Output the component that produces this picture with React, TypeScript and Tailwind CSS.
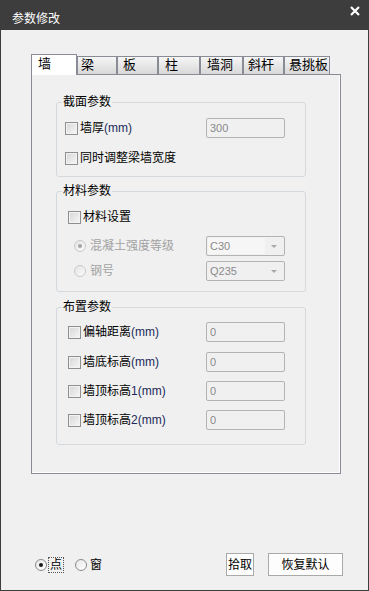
import React from "react";

const font = "font-['Liberation_Sans','Noto_Sans_CJK_SC',sans-serif]";

const tabs = [
  { label: "梁", cls: "w-[40px] pl-[3px]" },
  { label: "板", cls: "w-[41px] pl-[5px]" },
  { label: "柱", cls: "w-[42px] pl-[6px]" },
  { label: "墙洞", cls: "w-[43px] pl-[6px]" },
  { label: "斜杆", cls: "w-[41px] pl-[4px]" },
  { label: "悬挑板", cls: "w-[46px] pl-[4px]" },
];

const CheckBox: React.FC = () => (
  <span className="h-[13px] w-[13px] shrink-0 border border-[#8e8f8f] bg-linear-to-br from-[#d6d6d6] to-[#f7f7f7] shadow-[inset_0_0_0_1px_#f2f2f2]" />
);

const Radio: React.FC<{ checked?: boolean; disabled?: boolean }> = ({
  checked,
  disabled,
}) => (
  <span
    className={
      disabled
        ? "flex h-[12px] w-[12px] shrink-0 items-center justify-center rounded-full border border-[#c9c9c9] bg-linear-to-br from-[#e4e4e4] to-[#fbfbfb]"
        : "flex h-[12px] w-[12px] shrink-0 items-center justify-center rounded-full border border-[#8a8a8a] bg-linear-to-br from-[#e8e8e8] to-[#ffffff]"
    }
  >
    {checked && (
      <span
        className={
          disabled
            ? "h-[4px] w-[4px] rounded-full bg-[#a5a5a5]"
            : "h-[4px] w-[4px] rounded-full bg-[#1a1a1a]"
        }
      />
    )}
  </span>
);

const Field: React.FC<{ value: string }> = ({ value }) => (
  <div className="flex h-[20px] w-[79px] items-center rounded-[2px] border border-[#b4b4b4] bg-[#f0f0f0] pl-[3px] text-[11px] text-[#8a8a8a]">
    {value}
  </div>
);

const Combo: React.FC<{ value: string; inner?: boolean }> = ({ value, inner }) => (
  <div className="flex h-[20px] w-[79px] items-center rounded-[2px] border border-[#b4b4b4] bg-[#f0f0f0] p-[1px] text-[11px] text-[#8a8a8a]">
    <div
      className={
        inner
          ? "flex h-full flex-1 items-center bg-[#f6f6f6] pl-[2px]"
          : "flex h-full flex-1 items-center pl-[2px]"
      }
    >
      {value}
    </div>
    <svg width="18" height="18" viewBox="0 0 18 18" className="shrink-0">
      <path d="M6 8 L12 8 L9 11 Z" fill="#a8a8a8" />
    </svg>
  </div>
);

const Mm: React.FC<{ pre?: string }> = ({ pre }) => (
  <span className="text-[12px] text-[#1b2a5a]">
    {pre}
    (mm)
  </span>
);

const Group: React.FC<{
  title: string;
  className: string;
  children: React.ReactNode;
}> = ({ title, className, children }) => (
  <fieldset
    className={`ml-[24px] w-[250px] rounded-[3px] border border-[#d4d9de] ${className}`}
  >
    <legend className="ml-[5px] px-[1px] text-[12px] leading-[14px] text-black">
      {title}
    </legend>
    {children}
  </fieldset>
);

const Row: React.FC<{
  className: string;
  field?: React.ReactNode;
  children: React.ReactNode;
}> = ({ className, field, children }) => (
  <div className={`flex h-[20px] items-center pr-[20px] ${className}`}>
    <div className="flex flex-1 items-center text-[12px] leading-[14px]">
      {children}
    </div>
    {field}
  </div>
);

export default function App() {
  return (
    <div
      className={`flex h-[591px] w-[369px] flex-col bg-[#3d3d3d] px-px pb-px ${font}`}
    >
      {/* Title bar */}
      <div className="flex h-[30px] shrink-0 items-start justify-between">
        <span className="ml-[11px] mt-[12px] text-[12px] leading-[14px] text-white">
          参数修改
        </span>
        <svg width="10" height="10" viewBox="0 0 10 10" className="mr-[8px] mt-[6px]">
          <path d="M1 1 L9 9 M9 1 L1 9" stroke="#ffffff" strokeWidth="2.2" />
        </svg>
      </div>

      {/* Body */}
      <div className="flex flex-1 flex-col bg-[#f0f0f0]">
        {/* Tabs */}
        <div className="ml-[30px] mt-[24px] -mb-px flex h-[21px] items-end">
          <div className="relative z-10 h-[21px] w-[46px] border-x border-t border-[#898c95] bg-white pl-[6px] pt-[2px] text-[13px] leading-[14px] text-black">
            墙
          </div>
          {tabs.map((t) => (
            <div
              key={t.label}
              className={`mb-px h-[18px] border-x border-t border-[#898c95] bg-linear-to-b from-[#f6f6f6] to-[#d8d8d8] text-[13px] leading-[14px] text-black ${t.cls}`}
            >
              <span className="relative top-[1px]">{t.label}</span>
            </div>
          ))}
        </div>

        {/* Tab panel */}
        <div className="ml-[30px] h-[400px] w-[310px] border border-[#898c95] bg-[#f0f0f0] pt-[20px] shadow-[inset_-1px_-1px_0_#ffffff]">
          <Group title="截面参数" className="pb-[8px]">
            <Row className="mt-[9px] pl-[8px]" field={<Field value="300" />}>
              <CheckBox />
              <span className="ml-[2px]">墙厚</span>
              <Mm />
            </Row>
            <Row className="mt-[10px] pl-[8px]">
              <CheckBox />
              <span className="ml-[2px]">同时调整梁墙宽度</span>
            </Row>
          </Group>

          <Group title="材料参数" className="mt-[7px] pb-[10px]">
            <Row className="mt-[9px] pl-[11px]">
              <CheckBox />
              <span className="ml-[2px]">材料设置</span>
            </Row>
            <Row
              className="mt-[9px] pl-[17px]"
              field={<Combo value="C30" inner />}
            >
              <Radio checked disabled />
              <span className="ml-[4px] text-[#a2a2a2]">混凝土强度等级</span>
            </Row>
            <Row className="mt-[5px] pl-[17px]" field={<Combo value="Q235" />}>
              <Radio disabled />
              <span className="ml-[4px] text-[#a2a2a2]">钢号</span>
            </Row>
          </Group>

          <Group title="布置参数" className="mt-[8px] pb-[14px]">
            <Row className="mt-[8px] pl-[11px]" field={<Field value="0" />}>
              <CheckBox />
              <span className="ml-[2px]">偏轴距离</span>
              <Mm />
            </Row>
            <Row className="mt-[10px] pl-[11px]" field={<Field value="0" />}>
              <CheckBox />
              <span className="ml-[2px]">墙底标高</span>
              <Mm />
            </Row>
            <Row className="mt-[9px] pl-[11px]" field={<Field value="0" />}>
              <CheckBox />
              <span className="ml-[2px]">墙顶标高</span>
              <Mm pre="1" />
            </Row>
            <Row className="mt-[9px] pl-[11px]" field={<Field value="0" />}>
              <CheckBox />
              <span className="ml-[2px]">墙顶标高</span>
              <Mm pre="2" />
            </Row>
          </Group>
        </div>

        {/* Bottom bar */}
        <div className="mt-[79px] flex h-[23px] items-center text-[12px] leading-[14px] text-black">
          <div className="ml-[34px] flex items-center">
            <Radio checked />
            <span className="ml-[1px] border border-dotted border-[#555] px-px">点</span>
          </div>
          <div className="ml-[11px] flex items-center">
            <Radio />
            <span className="ml-[3px]">窗</span>
          </div>
          <div className="ml-auto mr-[25px] flex items-center gap-[14px]">
            <button className="flex h-[23px] w-[28px] items-center justify-center border border-[#a9a9a9] bg-[#fdfdfd]">
              拾取
            </button>
            <button className="flex h-[23px] w-[75px] items-center justify-center border border-[#a9a9a9] bg-[#fdfdfd]">
              恢复默认
            </button>
          </div>
        </div>
      </div>
    </div>
  );
}
